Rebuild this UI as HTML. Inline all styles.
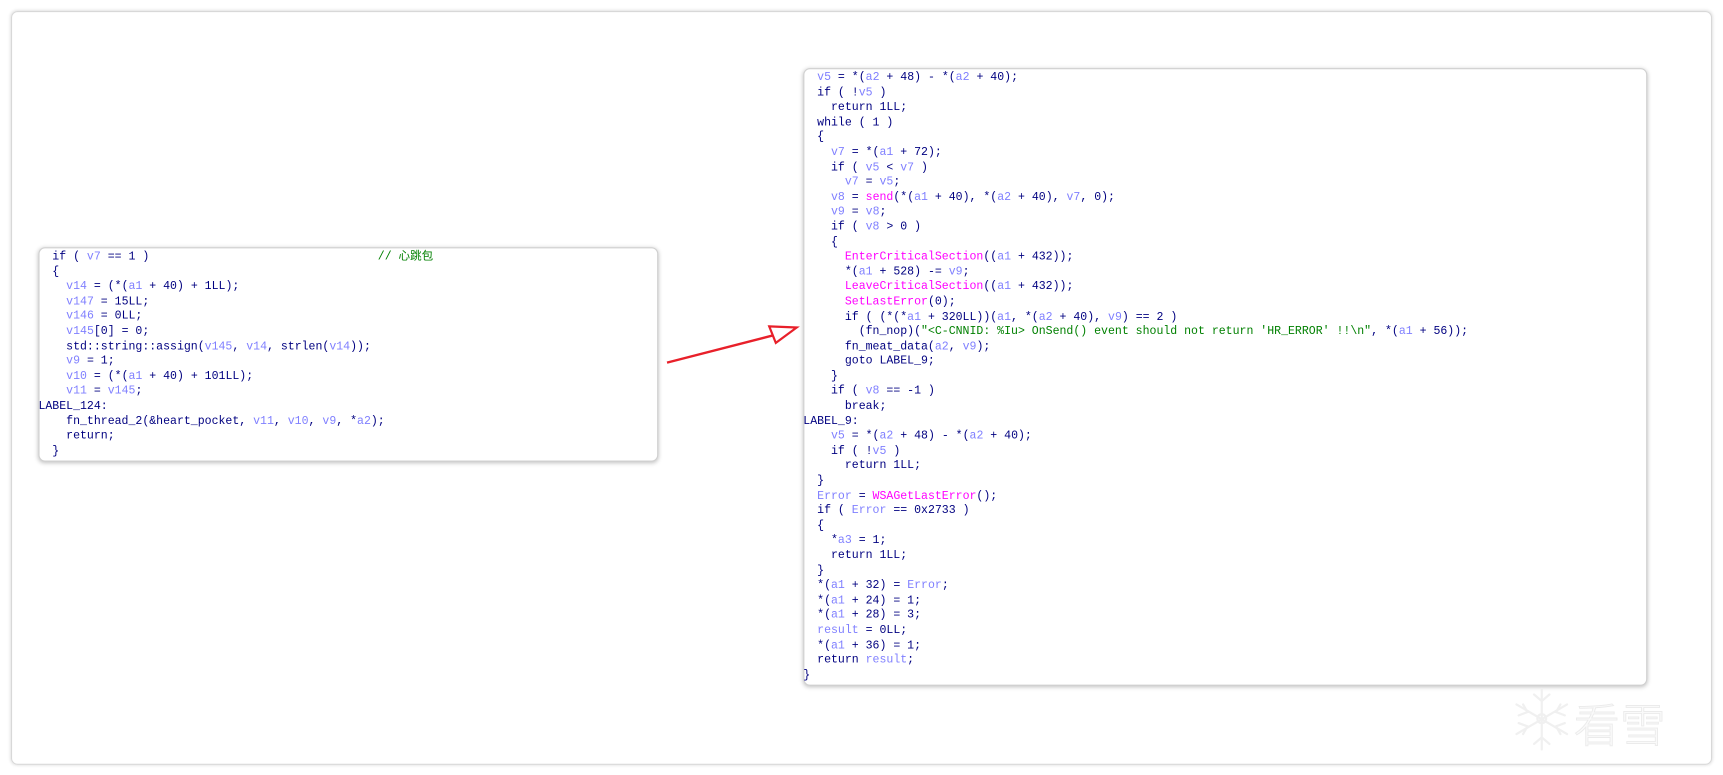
<!DOCTYPE html>
<html><head><meta charset="utf-8">
<style>
html,body{margin:0;padding:0;background:#fff;width:1723px;height:775px;overflow:hidden}
#w{position:absolute;left:0;top:0;width:1568px;height:705px;transform:scale(1.0989);transform-origin:0 0}
.frame{position:absolute;left:10px;top:10px;width:1546px;height:684px;border:1px solid #d8d8d8;border-radius:6px;box-shadow:0 0 3px rgba(0,0,0,.15)}
.box{position:absolute;background:#fff;border:1px solid #d0d0d0;border-radius:6px;box-shadow:0 1px 4px rgba(0,0,0,.25)}
pre{margin:0;font-family:"Liberation Mono","Noto Sans CJK SC",monospace;font-size:10.5px;line-height:13.6px;color:#000080;white-space:pre}
.v{color:#8080ff}.f{color:#ff00ff}.s{color:#008000}
</style></head><body><div id="w">
<div class="frame"></div>
<div class="box" style="left:35px;top:225px;width:562px;height:193px"></div>
<pre style="position:absolute;left:35px;top:228px">  if ( <span class="v">v7</span> == 1 )                                 <span class="s">// 心跳包</span>
  {
    <span class="v">v14</span> = (*(<span class="v">a1</span> + 40) + 1LL);
    <span class="v">v147</span> = 15LL;
    <span class="v">v146</span> = 0LL;
    <span class="v">v145</span>[0] = 0;
    std::string::assign(<span class="v">v145</span>, <span class="v">v14</span>, strlen(<span class="v">v14</span>));
    <span class="v">v9</span> = 1;
    <span class="v">v10</span> = (*(<span class="v">a1</span> + 40) + 101LL);
    <span class="v">v11</span> = <span class="v">v145</span>;
LABEL_124:
    fn_thread_2(&amp;heart_pocket, <span class="v">v11</span>, <span class="v">v10</span>, <span class="v">v9</span>, *<span class="v">a2</span>);
    return;
  }</pre>
<div class="box" style="left:731px;top:62px;width:766px;height:560px"></div>
<pre style="position:absolute;left:731px;top:65px">  <span class="v">v5</span> = *(<span class="v">a2</span> + 48) - *(<span class="v">a2</span> + 40);
  if ( !<span class="v">v5</span> )
    return 1LL;
  while ( 1 )
  {
    <span class="v">v7</span> = *(<span class="v">a1</span> + 72);
    if ( <span class="v">v5</span> &lt; <span class="v">v7</span> )
      <span class="v">v7</span> = <span class="v">v5</span>;
    <span class="v">v8</span> = <span class="f">send</span>(*(<span class="v">a1</span> + 40), *(<span class="v">a2</span> + 40), <span class="v">v7</span>, 0);
    <span class="v">v9</span> = <span class="v">v8</span>;
    if ( <span class="v">v8</span> &gt; 0 )
    {
      <span class="f">EnterCriticalSection</span>((<span class="v">a1</span> + 432));
      *(<span class="v">a1</span> + 528) -= <span class="v">v9</span>;
      <span class="f">LeaveCriticalSection</span>((<span class="v">a1</span> + 432));
      <span class="f">SetLastError</span>(0);
      if ( (*(*<span class="v">a1</span> + 320LL))(<span class="v">a1</span>, *(<span class="v">a2</span> + 40), <span class="v">v9</span>) == 2 )
        (fn_nop)(<span class="s">"&lt;C-CNNID: %Iu&gt; OnSend() event should not return 'HR_ERROR' !!\n"</span>, *(<span class="v">a1</span> + 56));
      fn_meat_data(<span class="v">a2</span>, <span class="v">v9</span>);
      goto LABEL_9;
    }
    if ( <span class="v">v8</span> == -1 )
      break;
LABEL_9:
    <span class="v">v5</span> = *(<span class="v">a2</span> + 48) - *(<span class="v">a2</span> + 40);
    if ( !<span class="v">v5</span> )
      return 1LL;
  }
  <span class="v">Error</span> = <span class="f">WSAGetLastError</span>();
  if ( <span class="v">Error</span> == 0x2733 )
  {
    *<span class="v">a3</span> = 1;
    return 1LL;
  }
  *(<span class="v">a1</span> + 32) = <span class="v">Error</span>;
  *(<span class="v">a1</span> + 24) = 1;
  *(<span class="v">a1</span> + 28) = 3;
  <span class="v">result</span> = 0LL;
  *(<span class="v">a1</span> + 36) = 1;
  return <span class="v">result</span>;
}</pre>
<svg style="position:absolute;left:0;top:0" width="1568" height="705">
<line x1="607" y1="330" x2="712" y2="303" stroke="#e8202a" stroke-width="2.2"/>
<path d="M700 297 L725 298 L706 312 Z" fill="#fff" stroke="#e8202a" stroke-width="2"/>
<g stroke="#f0f0f0" stroke-width="2" fill="none" stroke-linecap="round">
<line x1="1403" y1="627" x2="1403" y2="682"/>
<line x1="1380" y1="641" x2="1426" y2="668"/>
<line x1="1380" y1="668" x2="1426" y2="641"/>
<path d="M1396 632 L1403 638 L1410 632 M1396 677 L1403 671 L1410 677 M1382 651 L1390 648 L1386 641 M1424 651 L1416 648 L1420 641 M1382 658 L1390 661 L1386 668 M1424 658 L1416 661 L1420 668"/>
<circle cx="1403" cy="654" r="4"/>
</g>
<text x="1432" y="675" font-family="Noto Sans CJK SC,sans-serif" font-size="42" font-weight="300" fill="#fafafa" stroke="#ebebeb" stroke-width="0.8">看雪</text>
</svg>
</div></body></html>
